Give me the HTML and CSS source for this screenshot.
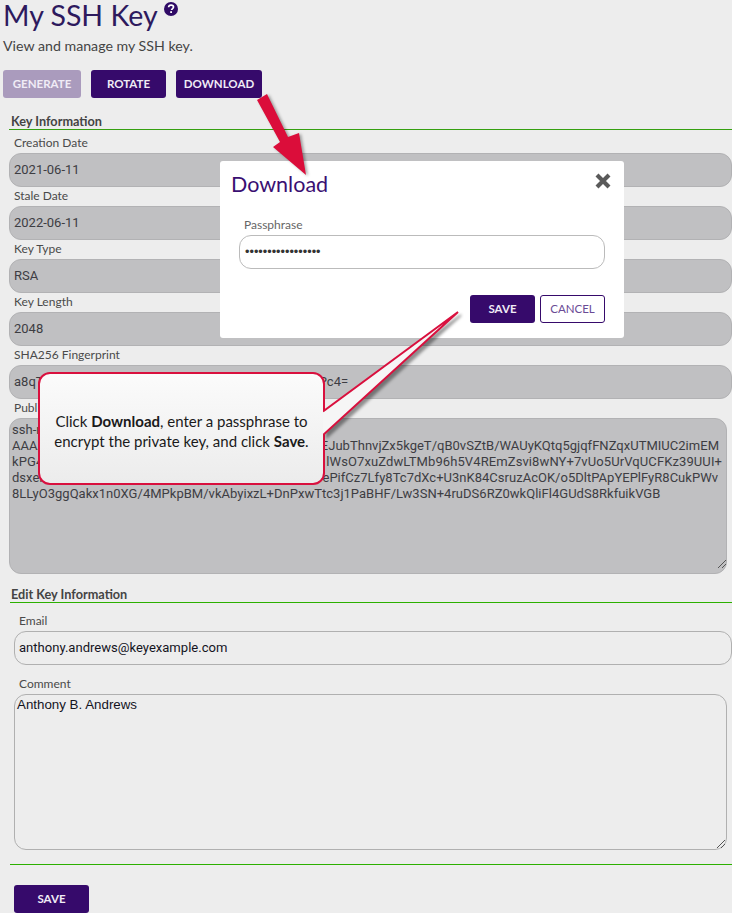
FILE: index.html
```html
<!DOCTYPE html>
<html lang="en">
<head>
<meta charset="utf-8">
<title>My SSH Key</title>
<link rel="stylesheet" href="styles.css">
</head>
<body>
<main class="page">
  <h1 class="title">My SSH Key<svg class="help" viewBox="0 0 14 14" aria-hidden="true"><circle cx="7" cy="7" r="7" fill="#2f0a66"/><path d="M4.600 5.300C4.700 3.900 5.700 3.200 7.100 3.200c1.400 0 2.400.8 2.400 1.900 0 1-.6 1.400-1.200 1.800-.5.3-.7.6-.7 1.200" fill="none" stroke="#fff" stroke-width="1.700"/><rect x="6.200" y="9.200" width="1.800" height="1.800" fill="#fff"/></svg></h1>
  <p class="subtitle">View and manage my SSH key.</p>
  <div class="actions">
    <button class="btn btn-disabled btn-generate">GENERATE</button>
    <button class="btn btn-rotate">ROTATE</button>
    <button class="btn btn-download">DOWNLOAD</button>
  </div>
  <section class="info">
    <h2 class="section-head head-dark">Key Information</h2>
    <div class="field"><label class="label">Creation Date</label><div class="readonly">2021-06-11</div></div>
    <div class="field"><label class="label">Stale Date</label><div class="readonly">2022-06-11</div></div>
    <div class="field"><label class="label">Key Type</label><div class="readonly">RSA</div></div>
    <div class="field"><label class="label">Key Length</label><div class="readonly">2048</div></div>
    <div class="field"><label class="label">SHA256 Fingerprint</label><div class="readonly">a8qT3mZk0vLw7YbNf2XcRhQe9UdSgJt5AoPi1Kyin6Pc4=</div></div>
    <div class="field field-key"><label class="label">Public Key</label>
      <div class="readonly key">
        <div class="key-line">ssh-rsa</div>
        <div class="key-line key-a"><span>AAAAB3Nz</span><span>EJubThnvjZx5kgeT/qB0vSZtB/WAUyKQtq5gjqfFNZqxUTMIUC2imEM</span></div>
        <div class="key-line key-b"><span>kPG4vXe8</span><span>lWsO7xuZdwLTMb96h5V4REmZsvi8wNY+7vUo5UrVqUCFKz39UUI+</span></div>
        <div class="key-line key-c"><span>dsxeK1oP</span><span>ePifCz7Lfy8Tc7dXc+U3nK84CsruzAcOK/o5DltPApYEPlFyR8CukPWv</span></div>
        <div class="key-line">8LLyO3ggQakx1n0XG/4MPkpBM/vkAbyixzL+DnPxwTtc3j1PaBHF/Lw3SN+4ruDS6RZ0wkQliFl4GUdS8RkfuikVGB</div>
      </div>
      <svg class="grip grip-key" viewBox="0 0 9 9" aria-hidden="true"><path d="M1 9 9 1M5 9l4-4" stroke="#555" fill="none"/></svg>
    </div>
  </section>
  <section class="edit">
    <h2 class="section-head head-green">Edit Key Information</h2>
    <div class="edit-body">
      <div><label class="label label-edit">Email</label><div class="entry">anthony.andrews@keyexample.com</div></div>
      <div><label class="label label-edit">Comment</label><div class="entry comment">Anthony B. Andrews<svg class="grip grip-comment" viewBox="0 0 9 9" aria-hidden="true"><path d="M1 9 9 1M5 9l4-4" stroke="#555" fill="none"/></svg></div></div>
    </div>
    <div class="form-foot"><button class="btn btn-save-page">SAVE</button></div>
  </section>
</main>

<div class="modal" role="dialog">
  <div class="modal-head">
    <h3 class="modal-title">Download</h3>
    <svg class="close" viewBox="0 0 16 16" aria-hidden="true"><path d="M2 2l12 12M14 2 2 14" stroke="#5a5a5a" stroke-width="4.200" fill="none"/></svg>
  </div>
  <label class="label modal-label">Passphrase</label>
  <div class="pass">•••••••••••••••••</div>
  <div class="modal-actions">
    <button class="btn btn-modal-save">SAVE</button>
    <button class="btn btn-cancel">CANCEL</button>
  </div>
</div>

<svg class="arrow" viewBox="0 0 80 100" aria-hidden="true"><path d="M7 10 17 4 38 47 49 43 56 85 23 57 30 52Z" fill="#db0d3a"/></svg>

<div class="callout">
  <p class="callout-text">Click <b>Download</b>, enter a passphrase to encrypt the private key, and click <b>Save</b>.</p>
</div>
<svg class="tail" viewBox="0 0 150 140" aria-hidden="true"><path d="M0 100.500 135 1 0 124Z" fill="#f6f6f6"/><path d="M0 100.500 135 1 0 124" fill="none" stroke="#d9103e" stroke-width="2" stroke-linejoin="miter"/></svg>
</body>
</html>
```
FILE: styles.css
```css
* { box-sizing: border-box; }
html, body { margin: 0; padding: 0; }
body {
  position: relative;
  width: 732px;
  height: 913px;
  overflow: hidden;
  background: #ededed;
  color: #3c3c46;
  font-family: Lato, "Liberation Sans", sans-serif;
  font-size: 13px;
}
.title {
  margin: 0;
  padding-left: 3px;
  height: 32px;
  font-size: 28.500px;
  line-height: 30px;
  font-weight: 400;
  color: #2d1a5e;
}
.help { width: 14px; height: 14px; margin-left: 6px; vertical-align: 10px; }
.subtitle { margin: 6px 0 0 3px; height: 16px; line-height: 16px; font-size: 14.200px; color: #444; }
.actions { display: flex; gap: 10px; margin: 16px 0 0 3px; }
.btn {
  height: 28px;
  padding: 0 0 2px;
  border: 0;
  border-radius: 3px;
  background: #360a6b;
  color: #f0ecf6;
  font-family: inherit;
  font-size: 11.500px;
  font-weight: 700;
}
.btn-generate { width: 78px; background: #aa9bbd; }
.btn-rotate { width: 75px; }
.btn-download { width: 86px; }
.info { margin: 14px 0 0 9px; }
.section-head {
  margin: 0;
  height: 18px;
  padding: 1px 0 0 2px;
  font-size: 12.700px;
  font-weight: 700;
  line-height: 16px;
  color: #444;
  border-bottom: 1px solid;
}
.head-dark { border-color: #35a010; }
.head-green { border-color: #2cb000; padding-left: 1px; }
.field { position: relative; height: 53px; }
.field-key { height: 179px; }
.label { display: block; height: 23px; padding: 6px 0 0 5px; font-size: 12px; line-height: 14px; color: #4a4a4a; }
.readonly {
  height: 34px;
  padding-left: 4px;
  line-height: 32px;
  font-family: Roboto, sans-serif;
  font-size: 13px;
  color: #3d3d42;
  background: #c0c0c2;
  border: 1px solid #b2b2b4;
  border-radius: 12px;
}
.key {
  width: 718px;
  height: 156px;
  padding: 3px 2px;
  line-height: 16px;
  letter-spacing: .02px;
  white-space: nowrap;
  overflow: hidden;
}
.key-line { height: 16px; }
.key-a, .key-b, .key-c { display: flex; justify-content: space-between; }
.key-a { width: 707px; }
.key-b { width: 710px; letter-spacing: .1px; }
.key-c { width: 706px; }
.grip { position: absolute; width: 9px; height: 9px; }
.grip-key { left: 708px; bottom: 6px; }
.edit { margin: 11px 0 0 10px; }
.edit-body { display: flex; flex-direction: column; gap: 1px; margin-left: 4px; }
.label-edit { height: 28px; padding-top: 11px; }
.entry {
  height: 34px;
  padding-left: 4px;
  line-height: 32px;
  font-family: Roboto, sans-serif;
  font-size: 13.050px;
  color: #14141e;
  border: 1px solid #b0b0b0;
  border-radius: 12px;
}
.comment {
  position: relative;
  width: 713px;
  height: 156px;
  padding: 1px 2px;
  line-height: 18px;
  font-family: "Liberation Sans", sans-serif;
  font-size: 13.330px;
}
.grip-comment { right: 1px; bottom: 1px; }
.form-foot { margin-top: 14px; padding: 20px 0 0 4px; border-top: 1px solid #2cb000; }
.btn-save-page { width: 75px; }

.modal {
  position: absolute;
  left: 220px;
  top: 161px;
  width: 404px;
  height: 177px;
  padding: 11px 19px 0;
  background: #fff;
  border-radius: 3px;
}
.modal-head { display: flex; justify-content: space-between; height: 31px; margin: 0 -6px 0 -8px; }
.modal-title { margin: 0; font-size: 21.500px; line-height: 24px; font-weight: 400; color: #3a0f72; }
.close { width: 16px; height: 16px; margin-top: 1px; }
.modal-label { height: 32px; padding-top: 15px; color: #666; }
.pass {
  height: 34px;
  padding-left: 5px;
  line-height: 32px;
  font-family: "Liberation Sans", sans-serif;
  font-size: 12.700px;
  color: #333;
  border: 1px solid #bbb;
  border-radius: 12px;
}
.modal-actions { display: flex; justify-content: flex-end; gap: 5px; margin-top: 26px; }
.btn-modal-save { width: 65px; }
.btn-cancel { width: 65px; color: #6a4a95; font-weight: 400; background: #fff; border: 1px solid #360a6b; }

.arrow {
  position: absolute;
  left: 250px;
  top: 90px;
  width: 80px;
  height: 100px;
  filter: drop-shadow(2px 1px 1.500px rgba(0, 0, 0, .35));
}
.tail {
  position: absolute;
  left: 323px;
  top: 311px;
  width: 150px;
  height: 140px;
  filter: drop-shadow(3px 3px 1.500px rgba(0, 0, 0, .4));
}
.callout {
  position: absolute;
  left: 38px;
  top: 372px;
  width: 287px;
  height: 113px;
  display: flex;
  align-items: center;
  justify-content: center;
  padding-top: 4px;
  border: 2px solid #d9103e;
  border-radius: 12px;
  background: linear-gradient(#fbfbfb, #ececec);
}
.callout-text { margin: 0; width: 265px; text-align: center; font-size: 15px; line-height: 20px; color: #1a1a1a; }
```
